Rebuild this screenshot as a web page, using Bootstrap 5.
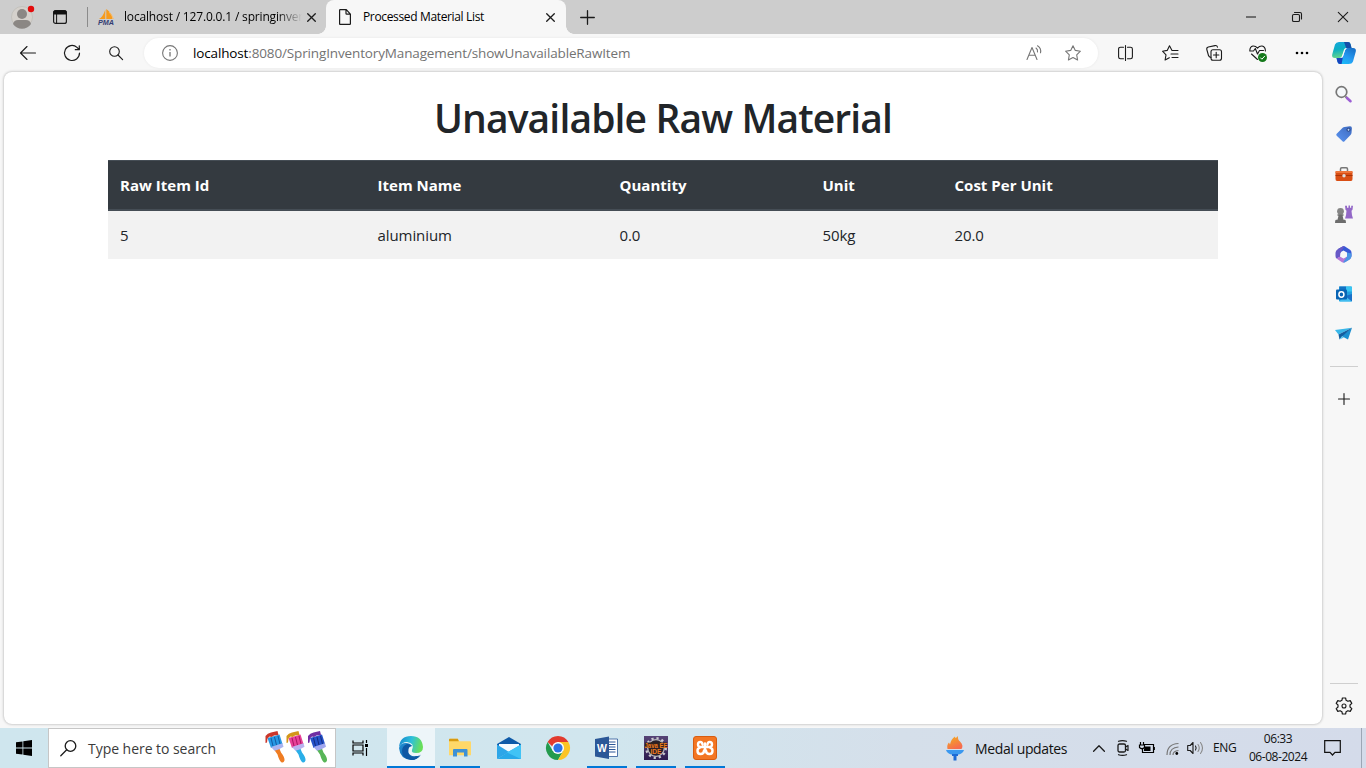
<!DOCTYPE html>
<html lang="en">
<head>
<meta charset="utf-8">
<meta name="viewport" content="width=device-width, initial-scale=1">
<title>Processed Material List</title>
<link href="https://cdn.jsdelivr.net/npm/bootstrap@5.3.0/dist/css/bootstrap.min.css" rel="stylesheet">
<style>
body{width:1366px;height:768px;overflow:hidden;background:#f7f7f7;font-family:"Open Sans","Noto Sans",sans-serif;color:#1b1b1b}
svg{display:block;flex:none;overflow:visible}
.ln{fill:none;stroke:#1b1b1b;stroke-width:1.1;stroke-linecap:round;stroke-linejoin:round}
.gy{stroke:#767676}
.slot{display:flex;align-items:center;justify-content:center;flex:none}
.titlebar{height:34px;background:#cdcdcd}
.w32{width:32px}.w38{width:38px}.w40{width:40px}.w44{width:44px}.w46{width:46px}.w48{width:48px}
.tabsep{width:1px;height:20px;background:#8b8b8b;margin-left:11px}
.tab-idle{width:238px;padding-left:10px;background:#cdcdcd}
.tab-txt{font-size:12px;letter-spacing:-.35px;white-space:nowrap;line-height:34px;color:#000}
.tab-txt.fade-end{width:178px;letter-spacing:-.17px;-webkit-mask-image:linear-gradient(90deg,#000 86%,transparent)}
.tab-open{width:240px;background:#f7f7f7;border-radius:8px 8px 0 0;position:relative}
.tab-open::before,.tab-open::after{content:"";position:absolute;bottom:0;width:8px;height:8px}
.tab-open::before{left:-8px;background:radial-gradient(circle at 0 0,#cdcdcd 7.5px,#f7f7f7 8px)}
.tab-open::after{right:-8px;background:radial-gradient(circle at 100% 0,#cdcdcd 7.5px,#f7f7f7 8px)}
.toolbar{height:38px;padding-left:6px}
.address{width:954px;height:30px;border-radius:15px;background:#fff;margin:0 6px;box-shadow:0 0 3px #0001;padding-left:14px;padding-right:6px}
.url{font-size:13.5px;letter-spacing:-.14px;color:#737373;margin-left:15px;white-space:nowrap}
.url b{font-weight:400;color:#000}
.pagepane{width:1318px;height:652px;margin-left:4px;background:#fff;border-radius:8px;box-shadow:0 0 3px #0005;padding:24px 104px 0}
.pagepane h1{font-size:39px;font-weight:600;line-height:48px;letter-spacing:-.87px;margin:-2px 0 18px;color:#212529;white-space:nowrap}
.items{line-height:24px;table-layout:fixed;width:1110px}
.items>:not(caption)>*>*{padding:12px;border:0;box-shadow:none;white-space:nowrap}
.items thead th{font-size:15px;letter-spacing:.02px;background:#343a40;color:#fff;border-top:1px solid #454d55;border-bottom:2px solid #454d55}
.items tbody td{background:#f2f2f2;font-size:15px;letter-spacing:-.08px;color:#212529}
.rail{width:43px;height:656px;padding-top:2px}
.rail .slot{height:40px;width:43px}
.rule{width:28px;height:1px;background:#cfcfcf}
.taskbar{height:40px;background:linear-gradient(90deg,#cfe6ee 0,#d1e6ee 45%,#d5dfea 66%,#d4dbea 100%);font-size:14px;color:#111}
.searchbox{width:288px;height:40px;background:#fff;border:1px solid #c6c6c6;color:#3b3b3b}
.searchbox span,.medal{font-size:14px;letter-spacing:-.04px;white-space:nowrap}
.medal{letter-spacing:-.38px}
.task{width:49px;height:40px;position:relative}
.task.live::after{content:"";position:absolute;left:5px;right:4px;bottom:0;height:2px;background:#0078d7}
.task.front{width:48px;background:#edf5f9}
.task.front::after{left:0;right:0}
.clock{font-size:12px;line-height:18px;letter-spacing:-.45px;width:74px;white-space:nowrap}
.edge-line{width:1px;height:40px;background:#9ca6b5}
</style>
</head>
<body>
<header class="titlebar d-flex align-items-center">
  <div class="slot w44"><svg width="24" height="24" viewBox="0 0 24 24"><circle cx="12" cy="12" r="10.5" fill="#d5d1cc" stroke="#bbb8b2" stroke-width=".6"/><circle cx="12" cy="9" r="5" fill="#8b8784"/><path d="M3 19q1-4 5-4h8q4 0 5 4a11 11 0 0 1-18 0z" fill="#8b8784"/><circle cx="21" cy="4" r="3.2" fill="#e30c0c"/></svg></div>
  <div class="slot w32"><svg width="14" height="14" viewBox="0 0 14 14"><rect x=".6" y=".6" width="12.8" height="12.8" rx="2" class="ln" style="stroke-width:1.2"/><path d="M1 1h12v3H1zM3.6 4v9.5" fill="#111" stroke="#111"/></svg></div>
  <div class="tabsep"></div>
  <div class="tab-idle d-flex align-items-center">
    <svg width="17" height="16" viewBox="0 0 17 16"><path d="M1 10q4-2 6.300-9.500v9.500zM8.300 0q5.700 4 6.200 10H8.300z" fill="#f79b1c"/><path d="M11 3q3 3 4.500 7" stroke="#f9bd6c" fill="none"/><text x="0" y="16" font-family="Liberation Sans" font-size="6.500" font-weight="700" font-style="italic" fill="#343c73" textLength="16" lengthAdjust="spacingAndGlyphs">PMA</text></svg>
    <span class="tab-txt fade-end" style="margin-left:9px">localhost / 127.0.0.1 / springinver</span>
    <svg width="9" height="9" viewBox="0 0 9 9" style="margin-left:5px"><path class="ln" style="stroke-width:1.3" d="M.7.7l7.6 7.6M8.3.7L.7 8.3"/></svg>
  </div>
  <div class="tab-open d-flex align-items-center h-100">
    <svg width="12" height="16" viewBox="0 0 12 16" style="margin-left:13px"><path class="ln" style="stroke-width:1.2" d="M1.300.6h6l4.100 4.600v9.500q0 .7-.7.7H1.300q-.7 0-.7-.7V1.300q0-.7.7-.7zM7 .6v3.900q0 .7.700.7h3.700"/></svg>
    <span class="tab-txt" style="margin-left:12px">Processed Material List</span>
    <svg class="ms-auto" width="9" height="9" viewBox="0 0 9 9" style="margin-right:11px"><path class="ln" style="stroke-width:1.3" d="M.7.7l7.6 7.6M8.3.7L.7 8.3"/></svg>
  </div>
  <div class="slot" style="width:43px"><svg width="15" height="15" viewBox="0 0 15 15"><path class="ln" style="stroke-width:1.3" d="M7.5.7v13.600M.7 7.500h13.600"/></svg></div>
  <div class="slot w46 ms-auto"><svg width="10" height="2"><path d="M0 1h10" stroke="#111"/></svg></div>
  <div class="slot w46"><svg width="10" height="10" viewBox="0 0 10 10"><rect class="ln" x=".5" y="2.500" width="7" height="7" rx="1.300"/><path class="ln" d="M2.500.5H8Q9.500.5 9.500 2v5"/></svg></div>
  <div class="slot w46"><svg width="10" height="10" viewBox="0 0 10 10"><path class="ln" d="M.3.3l9.400 9.400M9.700.3L.3 9.700"/></svg></div>
</header>

<nav class="toolbar d-flex align-items-center">
  <div class="slot w44"><svg width="16" height="14" viewBox="0 0 16 14"><path class="ln" d="M7 .5L.5 7 7 13.500M.5 7h15"/></svg></div>
  <div class="slot w44"><svg width="16" height="16" viewBox="0 0 16 16"><path class="ln" style="stroke-width:1.200" d="M15.500 8A7.500 7.500 0 1 1 13 2.400l2 2M15.300.8v3.900h-4"/></svg></div>
  <div class="slot w44"><svg width="14" height="14" viewBox="0 0 14 14"><circle class="ln" cx="5.500" cy="5.500" r="4.800"/><path class="ln" d="M9 9l4.600 4.600"/></svg></div>
  <div class="address d-flex align-items-center">
    <svg style="margin-left:4px" width="16" height="16" viewBox="0 0 16 16"><circle class="ln gy" cx="8" cy="8" r="7.400"/><path d="M8 7v4.500M8 4v1.500" stroke="#767676" stroke-width="1.300"/></svg>
    <span class="url"><b>localhost</b>:8080/SpringInventoryManagement/showUnavailableRawItem</span>
    <div class="slot w40 ms-auto"><svg width="16" height="16" viewBox="0 0 16 16"><path class="ln gy" d="M1 14.500L6 2.500l5 12M2.800 10.300h6.400M10 3q2 1.500 1.500 4M11.500.8q4 2.500 3 7"/></svg></div>
    <div class="slot w38"><svg width="16" height="16" viewBox="0 0 16 16"><path class="ln gy" d="M8 .7l2.300 4.700 5.100.8-3.700 3.600.9 5.200L8 12.500 3.400 15l.9-5.200L.6 6.200l5.100-.8z"/></svg></div>
  </div>
  <div class="slot w44"><svg width="16" height="16" viewBox="0 0 16 16"><path class="ln" d="M5.500 2.300H2.500Q.6 2.300.6 4v8q0 1.700 1.900 1.700h3M9.500 2.300h3q1.900 0 1.900 1.700v8q0 1.700-1.900 1.700h-3M7.500.5v15"/></svg></div>
  <div class="slot w44"><svg width="17" height="16" viewBox="0 0 17 16"><path class="ln" d="M14.500 5.500h-4.500L7.500.8 5.200 5.400.5 6.200l3.500 3.600-.9 5.200 4.200-2.300M10 5.500h6M9 9h7M10 12.500h6"/></svg></div>
  <div class="slot w44"><svg width="16" height="16" viewBox="0 0 16 16"><rect class="ln" x="5" y="4.700" width="10.500" height="10.500" rx="2"/><path class="ln" d="M10.200 7.300v5.400M7.500 10h5.400M5 12.500q-2-.3-2.500-2L.8 4.500q-.4-2 1.500-2.500L9 .6q2-.4 2.500 1.500"/></svg></div>
  <div class="slot w44"><svg width="18" height="17" viewBox="0 0 18 17"><path class="ln" d="M8.500 3.200Q6.500.8 4 1 .8 1.600.8 6h3.700l1.800-2.500L8.500 9l2-3.500h4M2.500 9l6 5.500M8.500 3.200Q10.500.8 13 1q3.400.6 3.400 5"/><circle cx="13.500" cy="12.500" r="4.500" fill="#14791a"/><path d="M11.300 12.600l1.600 1.600 3-3.300" fill="none" stroke="#fff"/></svg></div>
  <div class="slot w44"><svg width="14" height="4"><circle cx="2" cy="2" r="1.300"/><circle cx="7" cy="2" r="1.300"/><circle cx="12" cy="2" r="1.300"/></svg></div>
  <div class="slot w40"><svg width="24" height="22" viewBox="0 0 24 22"><defs><linearGradient id="cp1" x2=".2" y2="1"><stop stop-color="#15a6dd"/><stop offset=".5" stop-color="#0baec3"/><stop offset="1" stop-color="#62d58d"/></linearGradient><linearGradient id="cp2" x1="1" x2=".3" y2="1"><stop stop-color="#156ac2"/><stop offset=".6" stop-color="#269af2"/><stop offset="1" stop-color="#18bef6"/></linearGradient></defs><path d="M7 0h9q2 0 2.500 2l1 4h-5q-2 0-2.600 2L10 14q-.7 2-2.500 2H3Q-.5 16 .2 12.500L3 2.500Q4 0 7 0z" fill="url(#cp1)"/><path d="M12 0h4q2 0 2.500 2l1 4h-5.300z" fill="#154fa9"/><path d="M16.500 22H8q-2 0-2.500-2l-1-4h4q2 0 2.600-2L13 8q.7-2 2.500-2H21q3.500 0 2.800 3.500L21 19.500Q20 22 16.500 22z" fill="url(#cp2)"/><path d="M4.500 16h4q2 0 2.600-2l-1.500 8H8q-2 0-2.500-2z" fill="#1844bd"/><path d="M13 6.500h2q-1.500.5-2 2l-2 6q-.5 1.500-1.500 1.500H8q1.500 0 2-1.500z" fill="#fff"/></svg></div>
</nav>

<div class="d-flex">
  <main class="pagepane">
    <h1 class="text-center">Unavailable Raw Material</h1>
    <table class="table items mb-0">
      <colgroup><col style="width:257.500px"><col style="width:242px"><col style="width:203px"><col style="width:132px"><col></colgroup>
      <thead><tr><th>Raw Item Id</th><th>Item Name</th><th>Quantity</th><th>Unit</th><th>Cost Per Unit</th></tr></thead>
      <tbody><tr><td>5</td><td>aluminium</td><td>0.0</td><td>50kg</td><td>20.0</td></tr></tbody>
    </table>
  </main>
  <aside class="rail d-flex flex-column align-items-center">
    <div class="slot"><svg width="17" height="17" viewBox="0 0 17 17"><path d="M10.500 10.500l2 2" stroke="#777" stroke-width="2"/><path d="M12 12l3.500 3.200" stroke="#9c5fd4" stroke-width="2.600" stroke-linecap="round"/><circle cx="6.500" cy="6" r="5.300" fill="#f5f8fa" stroke="#777" stroke-width="1.700"/></svg></div>
    <div class="slot"><svg width="16" height="16" viewBox="0 0 16 16"><defs><linearGradient id="tg" x1="1" x2="0" y2="1"><stop stop-color="#3c68bd"/><stop offset="1" stop-color="#5b95f2"/></linearGradient></defs><path d="M8.500.9L14 .3q2 0 1.900 2l-.4 4.800q-.1 1-1 1.800L8.500 15.300q-1 1-2 0L.7 9.800q-1-1 0-2l6-6q.8-.8 1.800-.9z" fill="url(#tg)"/><circle cx="12.500" cy="3.800" r="1.500" fill="#b3d4fb" stroke="#253c7d"/></svg></div>
    <div class="slot"><svg width="18" height="14" viewBox="0 0 18 14"><path d="M5.500 4V2q0-1.200 1.200-1.200h4.600q1.200 0 1.200 1.200v2" fill="none" stroke="#777" stroke-width="1.500"/><path d="M1.500 4h15q1 0 1 1v7q0 2-1.500 2H2q-1.500 0-1.500-2V5q0-1 1-1z" fill="#d94e14"/><path d="M.5 8.500h17" stroke="#a83508"/><path d="M.5 5q0-1 1-1h15q1 0 1 1v1H.5z" fill="#ee753a"/><circle cx="9" cy="8.700" r="1.700" fill="#ddd"/></svg></div>
    <div class="slot"><svg width="18" height="18" viewBox="0 0 18 18"><path d="M10 .8h2v2h1.500V.6H15v2.200h1.200v-2H18l-.5 4-1 1 .5 4.400 1 3.300h-8l1-3.300.5-4.400-1-1z" fill="#9368c7"/><circle cx="5.500" cy="6.300" r="3.400" fill="#858585"/><path d="M2.500 9.200h6v1.600H7.600l.9 4h1.500q1 0 1 3.200H0q0-3.200 1-3.200h1.500l1-4h-1z" fill="#6d6d6d"/></svg></div>
    <div class="slot"><svg width="17" height="17" viewBox="0 0 17 17"><path d="M3 3l5-2.700q1-.5 2 .1L15 3.700q1.500 1 1.500 2.800v4L12 8V6.500L8.500 4.500 5 6.500z" fill="#3858d6"/><path d="M3 3l5-2.700q.8-.3 1.500 0L6 5.500 5 11l-3.500 1.500Q.5 11.500.5 10V6.700Q.5 4.500 3 3z" fill="#6759c6"/><path d="M1.500 12.500L5 10.500l3.500 2L12 10.500l4.500-1q-.2 3-2 4L10 16.200q-1.500.7-3 0z" fill="#b577d8"/><path d="M12 6.500l4.500 1v3q-.3 2-1.800 3L10 16.200q-1 .4-2 .2l4-5.900z" fill="#4a96e5"/><path d="M8.500 5.500l3 1.700v3.300l-3 1.700-3-1.700V7.200z" fill="#f7f7f7"/></svg></div>
    <div class="slot"><svg width="16" height="16" viewBox="0 0 16 16"><path d="M3 .5h12q1 0 1 1V15H3z" fill="#22a0df"/><path d="M3.500.5H10v5H3.500z" fill="#1273c4"/><path d="M10 .5h5q1 0 1 1v4h-6z" fill="#38c5f2"/><path d="M3 15.500l6-5h7v4.500q0 .8-1 .8H4z" fill="#42bdf0"/><path d="M9 10l7 5.500V8z" fill="#1a70c8"/><rect y="3.500" width="11" height="10" rx="1" fill="#0864b4"/><ellipse cx="5.400" cy="8.500" rx="2.500" ry="2.700" fill="none" stroke="#fff" stroke-width="1.500"/></svg></div>
    <div class="slot"><svg width="17" height="14" viewBox="0 0 17 14"><path d="M0 3L17 .8 3.500 7.500z" fill="#39b7e9"/><path d="M17 .8L13 12.500 6.500 9z" fill="#1a8fd0"/><path d="M17 .8L3.500 7.500l1 5 2.500-3z" fill="#135e9f"/><path d="M4.500 12.500L7 9.200l2 1.200z" fill="#54c4f0"/></svg></div>
    <div class="rule" style="margin-top:12px"></div>
    <div class="slot" style="margin-top:12px"><svg width="12" height="12" viewBox="0 0 12 12"><path class="ln" d="M6 .5v11M.5 6h11"/></svg></div>
    <div class="rule mt-auto"></div>
    <div class="slot" style="height:44px"><svg width="18" height="18" viewBox="0 0 18 18"><path class="ln" style="stroke-width:1.200" d="M7.400 1h3.200l.5 2.300 1.800 1 2.300-.7 1.600 2.800-1.800 1.600v2l1.800 1.600-1.600 2.800-2.300-.7-1.800 1-.5 2.300H7.400l-.5-2.300-1.800-1-2.300.7-1.600-2.800L3 10V8L1.200 6.400l1.600-2.800 2.300.7 1.800-1z"/><circle class="ln" cx="9" cy="9" r="2"/></svg></div>
  </aside>
</div>

<footer class="taskbar d-flex align-items-center">
  <div class="slot w48"><svg width="16" height="16" viewBox="0 0 16 16"><path d="M0 2.300l6.500-.9v6.200H0zM7.300 1.300L16 0v7.600H7.300zM0 8.400h6.500v6.200L0 13.700zM7.300 8.400H16V16l-8.700-1.300z"/></svg></div>
  <div class="searchbox d-flex align-items-center">
    <svg width="17" height="17" viewBox="0 0 17 17" style="margin-left:11px"><circle class="ln" style="stroke-width:1.300" cx="10.500" cy="6" r="5.300"/><path class="ln" style="stroke-width:1.300" d="M6.700 9.800L.8 15.700"/></svg>
    <span style="margin-left:11px">Type here to search</span>
    <svg class="ms-auto" width="64" height="34" viewBox="0 0 64 34" style="margin-right:6px">
      <defs><path id="hd" d="M9 18.500l5-2 2 5q4 5 3.500 8-1 3-3.500 1.500-2-2-3.500-7.500z"/><path id="br" d="M2.500 7l12-3.500 3 9.500-11.500 4z"/><path id="fe" d="M6 16l11.500-3.700 1 3.500-5 2.700-4 1.300z"/><path id="pt" d="M.5 12V5q2-3 5.500-3.500L12.500 0l1 4-4.500.5-2.500 1.500-2-.5-2 2-.5 4z"/></defs>
      <g><use href="#hd" fill="#ef7c22"/><use href="#br" fill="#2798e4"/><path d="M6 7l2 8M9.500 6l2 8M13 5l2 8" stroke="#155aa0"/><use href="#fe" fill="#aab3ef"/><use href="#pt" fill="#ca362b"/></g>
      <g transform="translate(21)"><use href="#hd" fill="#2aaee8"/><use href="#br" fill="#e84298"/><path d="M6 7l2 8M9.500 6l2 8M13 5l2 8" stroke="#a81463"/><use href="#fe" fill="#b9b1ef"/><use href="#pt" fill="#d39619"/></g>
      <g transform="translate(42.500)"><use href="#hd" fill="#58b557"/><use href="#br" fill="#2452c9"/><path d="M6 7l2 8M9.500 6l2 8M13 5l2 8" stroke="#142c82"/><use href="#fe" fill="#a0a7ef"/><use href="#pt" fill="#702da3"/></g>
    </svg>
  </div>
  <div class="slot w48"><svg width="17" height="16" viewBox="0 0 17 16"><path d="M1 .5V3h10V.5M1 15.500V13h10v2.500M1 5h10v6H1zM14.500 0v3M14.500 8v8" fill="none" stroke="#000" stroke-width="1.200"/><path d="M13 4h3v3h-3z"/></svg></div>
  <div class="slot task live front" style="margin-left:3px"><svg width="24" height="24" viewBox="0 0 24 24"><defs><linearGradient id="e1" x2="1" y2=".2"><stop stop-color="#1484ce"/><stop offset=".55" stop-color="#2ec0da"/><stop offset="1" stop-color="#68df59"/></linearGradient><linearGradient id="e2" x2="1" y2="1"><stop stop-color="#2190d4"/><stop offset="1" stop-color="#09559e"/></linearGradient></defs><path d="M0 11Q1 0 12 0q11 0 12 11 0 6-7 6-5 0-4-3 3-7-5-8Q3 6 0 11z" fill="url(#e1)"/><path d="M0 12q1-5 7-5 4 0 6 3-5 1-4 6 2 5 8 4 4 0 5-2-4 6-10 6Q1 23 0 12z" fill="url(#e2)"/><path d="M9.500 13q-1.500 8 6 8.500 4 0 6.500-2.500-4 5-9 5Q3 23 3 15q0-5 5-7 3 0 5 2-3 0-3.500 3z" fill="#0d58a4"/></svg></div>
  <div class="slot task live"><svg width="22" height="20" viewBox="0 0 22 20"><path d="M0 1.500Q0 .8.800.8h8l1.500 2.500H21q1 0 1 1v13H0z" fill="#ffd869"/><path d="M0 3.300V1.500Q0 .8.800.8h8l1 2.500z" fill="#d89b12"/><path d="M4 18.500V12q0-1 1-1h12.500q1 0 1 1v6.500H15v-4H8v4z" fill="#3d91d6"/></svg></div>
  <div class="slot task"><svg width="24" height="22" viewBox="0 0 24 22"><path d="M0 7L12 0l12 7v3H0z" fill="#0e5aa8"/><path d="M2 7h20v7l-10 3-10-3z" fill="#f5fbff"/><path d="M0 7.500l12 7.500-12 7z" fill="#2da6e8"/><path d="M24 7.500v14.500H0l12-7.500z" fill="#29a9e9"/><path d="M24 7.500v14.500L10 15.500z" fill="#41c3f5"/></svg></div>
  <div class="slot task"><svg width="24" height="24" viewBox="0 0 24 24"><path d="M1.600 6A12 12 0 0 1 22.400 6L12 6 8 12z" fill="#e23b2e"/><path d="M1.600 6A12 12 0 0 0 12 24l5.200-9H6.800z" fill="#239b4e"/><path d="M22.400 6A12 12 0 0 1 12 24l5.200-9V9L12 6z" fill="#fcc425"/><circle cx="12" cy="12" r="6" fill="#fff"/><circle cx="12" cy="12" r="4.600" fill="#2c73e7"/></svg></div>
  <div class="slot task live"><svg width="23" height="24" viewBox="0 0 23 24"><path d="M12 3h10.500v17.500H12z" fill="#fff" stroke="#2b5797" stroke-width=".8"/><path d="M13 6h7.500M13 8.500h7.500M13 11h7.500M13 13.500h7.500M13 16h7.500" stroke="#2b5797"/><path d="M0 3l14-2.500v22.500L0 20.500z" fill="#2b5797"/><text x="2" y="15.800" font-family="Liberation Sans" font-size="10.500" font-weight="700" fill="#fff">W</text></svg></div>
  <div class="slot task live"><svg width="24" height="24" viewBox="0 0 24 24"><defs><linearGradient id="jv" x2="0" y2="1"><stop stop-color="#574477"/><stop offset="1" stop-color="#2d1c50"/></linearGradient></defs><rect width="24" height="24" fill="url(#jv)"/><circle cx="12" cy="12" r="9.700" fill="none" stroke="#c9c9ce" stroke-width="2.500" stroke-dasharray="2.200 2.900"/><circle cx="12" cy="12" r="8.300" fill="#29202b" stroke="#b9b9bf" stroke-width="1.300"/><path d="M1 6.500h22v5H1z" fill="#33231f"/><text x=".5" y="11.500" textLength="23" lengthAdjust="spacingAndGlyphs" font-family="Liberation Sans" font-size="7" font-weight="700" fill="#ef7b1d">Java EE</text><text x="6.500" y="17.500" textLength="11" lengthAdjust="spacingAndGlyphs" font-family="Liberation Sans" font-size="7" font-weight="700" fill="#ef7b1d">IDE</text></svg></div>
  <div class="slot task live"><svg width="24" height="24" viewBox="0 0 24 24"><rect x=".5" y=".5" width="23" height="23" rx="2.500" fill="#f37623" stroke="#d85c10"/><path d="M9.500 8.500Q9.300 6 7.300 6 5 6 5 8.500T7.500 11h9Q19 11 19 8.500T16.700 6q-2 0-2.200 2.500M7 11.500q-2.500.7-2.500 3.200Q4.500 18 7.500 18q3.500 0 3.500-3.500h2q0 3.500 3.500 3.500 3 0 3-3.300 0-2.500-2.500-3.200M12 7.500v7" fill="none" stroke="#fff" stroke-width="2.400" stroke-linecap="round" stroke-linejoin="round"/></svg></div>
  <div class="ms-auto d-flex align-items-center">
    <svg width="18" height="25" viewBox="0 0 18 25"><defs><linearGradient id="fl" x2=".5" y2="1"><stop stop-color="#f4b11c"/><stop offset="1" stop-color="#f66c4f"/></linearGradient></defs><path d="M1.500 13Q.5 9 3 6.500l1 2Q5 3 9 .5q-.5 2 1.500 1L12 0q-.5 3.500 2 5.500 4 4 1.500 7.500z" fill="url(#fl)"/><path d="M0 14h18q-1 3-5 4.500H5Q1 17 0 14z" fill="#3b98ef"/><path d="M6 18h6v2h-1.500v4.500h-3V20H6z" fill="#1d6ad4"/></svg>
    <span class="medal" style="margin-left:11px;width:92px">Medal updates</span>
    <svg width="12" height="7" viewBox="0 0 12 7" style="margin-left:26px"><path class="ln" style="stroke-width:1.300" d="M.6 6.300L6 .8l5.400 5.500"/></svg>
    <svg width="12" height="16" viewBox="0 0 12 16" style="margin-left:12px"><rect class="ln" x="1" y="4" width="7.500" height="8" rx="1.500" style="stroke-width:1.300"/><path class="ln" style="stroke-width:1.200" d="M8.500 7l2.500-1.500v5L8.500 9M1.500 1.300q4-1.500 8 0M1.500 14.700q4 1.500 8 0"/></svg>
    <svg width="16" height="12" viewBox="0 0 16 12" style="margin-left:10px"><path d="M5 2.500h9.500v8H3.500V7M15.300 5v3M1.500 0v3M4.500 0v3M.5 3h5v2.500Q3 8 .5 5.500z" fill="none" stroke="#000" stroke-width="1.200"/><path d="M6 4.500h5.500V9H5V7z"/></svg>
    <svg width="13" height="13" viewBox="0 0 13 13" style="margin-left:11px"><path d="M1 13Q1 2 12.500 1.500M4 13q0-7.500 8.500-8M7 13q0-4 5.500-4.500" fill="none" stroke="#777" stroke-width="1.200"/><circle cx="10.800" cy="11.500" r="1.400"/></svg>
    <svg width="17" height="14" viewBox="0 0 17 14" style="margin-left:8px"><path class="ln" d="M.7 4.500h2.500L6 1.500v11L3.200 9.500H.7z"/><path class="ln" d="M8.500 5q1.300 2 0 4"/><path class="ln" style="stroke:#888" d="M11 3.500q2.500 3.500 0 7M13.500 1.500q4 5.500 0 11"/></svg>
    <span style="font-size:12px;letter-spacing:-.4px;margin-left:9px;width:24px">ENG</span>
    <div class="clock text-center" style="margin-left:4px"><div>06:33</div><div>06-08-2024</div></div>
    <svg width="17" height="16" viewBox="0 0 17 16" style="margin-left:9px"><path d="M.7.7h15.600v11.600H11L8.500 15 6 12.300H.7z" fill="none" stroke="#111" stroke-width="1.200"/></svg>
    <div class="edge-line" style="margin-left:20px;margin-right:4px"></div>
  </div>
</footer>
<script src="https://cdn.jsdelivr.net/npm/bootstrap@5.3.0/dist/js/bootstrap.bundle.min.js"></script>
</body>
</html>
